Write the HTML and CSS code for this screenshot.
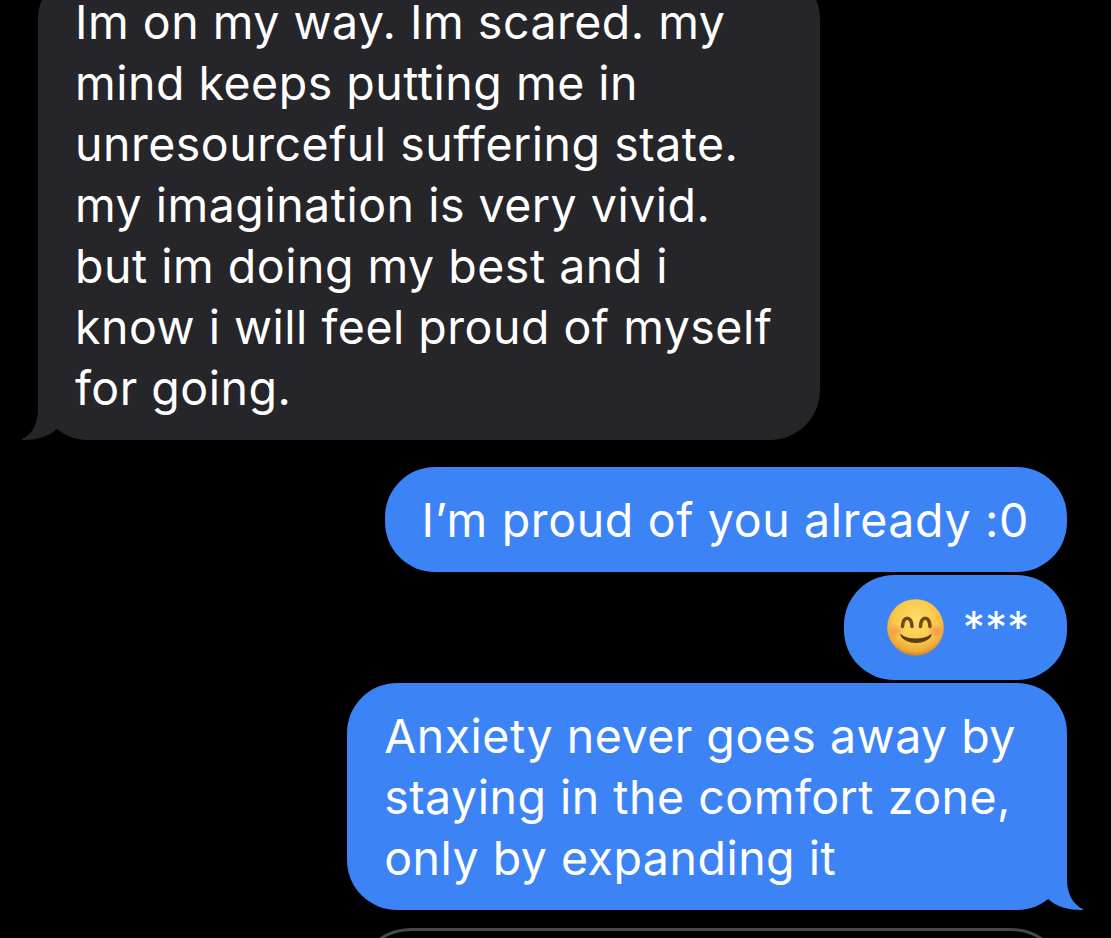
FILE: index.html
```html
<!DOCTYPE html>
<html>
<head>
    <title>Messages</title>
    <link rel="stylesheet" href="styles.css">
</head>
<body>
    <div class="thread">
        <div class="bubble received first">
            Im on my way. Im scared. my<br>
            mind keeps putting me in<br>
            unresourceful suffering state.<br>
            my imagination is very vivid.<br>
            but im doing my best and i<br>
            know i will feel proud of myself<br>
            for going.
            <svg class="tail tail-left" width="40" height="50" viewBox="0 0 40 50">
                <path fill="#262529" d="M18 0 L18 20 C18 33 12 45 2 49 C1 49.600 2 50 4 50 C16 50 29 47 38 38 L40 0 Z"/>
            </svg>
        </div>
        <div class="bubble sent spaced">I’m proud of you already :0</div>
        <div class="bubble sent emoji-row">
            <svg class="emoji" width="57" height="57" viewBox="0 0 57 57">
                <defs>
                    <radialGradient id="face" cx="50%" cy="38%" r="62%">
                        <stop offset="0%" stop-color="#fde06a"/>
                        <stop offset="62%" stop-color="#f9c84a"/>
                        <stop offset="88%" stop-color="#eda838"/>
                        <stop offset="100%" stop-color="#c9802a"/>
                    </radialGradient>
                    <radialGradient id="blush">
                        <stop offset="0%" stop-color="#f6874e" stop-opacity="0.7"/>
                        <stop offset="100%" stop-color="#f6874e" stop-opacity="0"/>
                    </radialGradient>
                </defs>
                <circle cx="28.500" cy="28.500" r="28.300" fill="url(#face)"/>
                <ellipse cx="8" cy="32" rx="9" ry="7" fill="url(#blush)"/>
                <ellipse cx="49" cy="32" rx="9" ry="7" fill="url(#blush)"/>
                <path d="M15.500 27.500 C15.500 16.500 25 16.500 25 27.500" fill="none" stroke="#75481c" stroke-width="3.500" stroke-linecap="round"/>
                <path d="M33.500 27.500 C33.500 16.500 43 16.500 43 27.500" fill="none" stroke="#75481c" stroke-width="3.500" stroke-linecap="round"/>
                <path d="M14 36 C20 41.500 37 41.500 44 36 C40 45.500 18 45.500 14 36 Z" fill="#5f3a17" stroke="#5f3a17" stroke-width="1.500" stroke-linejoin="round"/>
            </svg>
            <span class="stars">***</span>
        </div>
        <div class="bubble sent wide">
            Anxiety never goes away by<br>
            staying in the comfort zone,<br>
            only by expanding it
            <svg class="tail tail-right" width="40" height="50" viewBox="0 0 40 50">
                <path fill="#3c83f6" d="M22 0 L22 20 C22 33 28 45 38 49 C39 49.600 38 50 36 50 C24 50 11 47 2 38 L0 0 Z"/>
            </svg>
        </div>
    </div>
    <div class="composer-clip">
        <div class="composer"></div>
    </div>
</body>
</html>
```

FILE: styles.css
```css
html, body {
    height: 100%;
}
body {
    margin: 0;
    background: #000;
    color: #fff;
    font-family: Inter, "Liberation Sans", sans-serif;
    font-size: 46.5px;
    letter-spacing: 0.5px;
    line-height: 61px;
    overflow: hidden;
}
.thread {
    display: flex;
    flex-direction: column;
    align-items: flex-start;
    gap: 3px;
    margin-top: -31px;
    padding: 0 44px 0 38px;
}
.bubble {
    position: relative;
    padding: 23px 38px 21px 37px;
    border-radius: 50px;
    white-space: nowrap;
}
.received {
    background: #262529;
}
.first {
    width: 707px;
    margin-bottom: 24px;
}
.sent {
    align-self: flex-end;
    background: #3c83f6;
}
.spaced {
    letter-spacing: 0.65px;
}
.wide {
    padding-right: 51px;
}
.emoji-row {
    display: flex;
    align-items: center;
    gap: 19px;
    padding: 22px 38px 22px 43px;
}
.emoji {
    display: block;
}
.stars {
    font-size: 44px;
    letter-spacing: 0;
}
.tail {
    position: absolute;
    bottom: 0;
}
.tail-left {
    left: -18px;
}
.tail-right {
    right: -18px;
}
.composer-clip {
    height: 10px;
    margin-top: 18px;
    overflow: hidden;
}
.composer {
    box-sizing: border-box;
    height: 120px;
    margin: 0 44px 0 355px;
    border: 3px solid #48484a;
    border-radius: 56px;
}
```
